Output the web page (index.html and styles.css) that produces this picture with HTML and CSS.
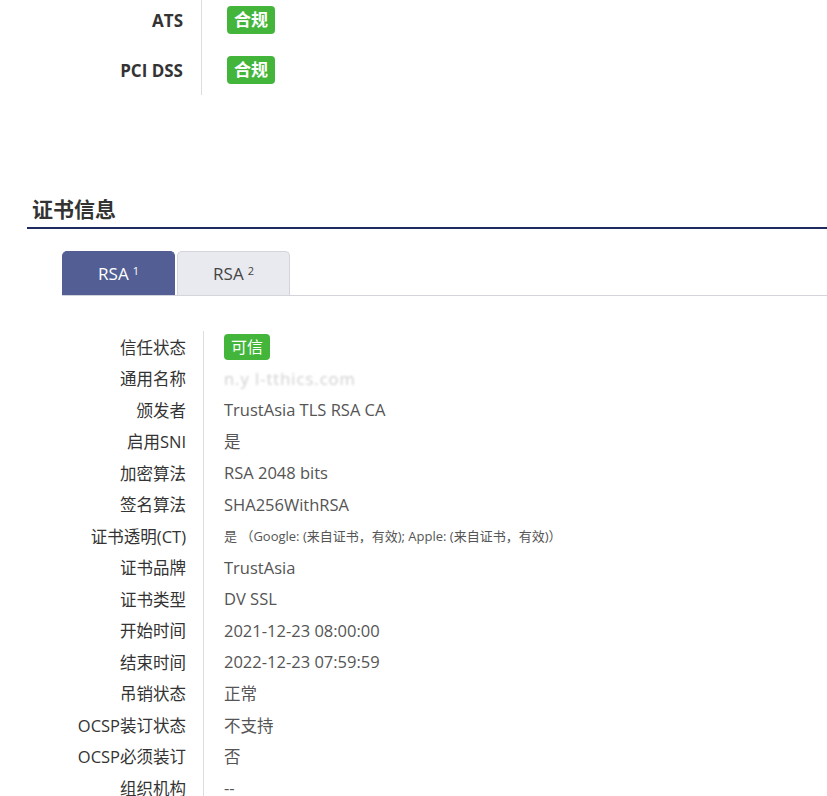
FILE: index.html
```html
<!DOCTYPE html>
<html lang="zh-CN">
<head>
    <meta charset="UTF-8">
    <title>证书信息</title>
    <link rel="stylesheet" href="styles.css">
</head>
<body>
    <div class="compliance">
        <div class="comp-row">
            <div class="comp-label">ATS</div>
            <div class="comp-value"><span class="badge badge-bold">合规</span></div>
        </div>
        <div class="comp-row">
            <div class="comp-label">PCI DSS</div>
            <div class="comp-value"><span class="badge badge-bold">合规</span></div>
        </div>
    </div>

    <h2 class="section-head">证书信息</h2>

    <div class="tabs">
        <div class="tab active">RSA <sup>1</sup></div>
        <div class="tab">RSA <sup>2</sup></div>
    </div>

    <div class="cert-table">
        <div class="cert-label">信任状态</div>
        <div class="cert-value"><span class="badge">可信</span></div>
        <div class="cert-label">通用名称</div>
        <div class="cert-value"><span class="masked">n.y l-tthics.com</span></div>
        <div class="cert-label">颁发者</div>
        <div class="cert-value">TrustAsia TLS RSA CA</div>
        <div class="cert-label">启用SNI</div>
        <div class="cert-value">是</div>
        <div class="cert-label">加密算法</div>
        <div class="cert-value">RSA 2048 bits</div>
        <div class="cert-label">签名算法</div>
        <div class="cert-value">SHA256WithRSA</div>
        <div class="cert-label">证书透明(CT)</div>
        <div class="cert-value small">是 （Google: (来自证书，有效); Apple: (来自证书，有效)）</div>
        <div class="cert-label">证书品牌</div>
        <div class="cert-value">TrustAsia</div>
        <div class="cert-label">证书类型</div>
        <div class="cert-value">DV SSL</div>
        <div class="cert-label">开始时间</div>
        <div class="cert-value">2021-12-23 08:00:00</div>
        <div class="cert-label">结束时间</div>
        <div class="cert-value">2022-12-23 07:59:59</div>
        <div class="cert-label">吊销状态</div>
        <div class="cert-value">正常</div>
        <div class="cert-label">OCSP装订状态</div>
        <div class="cert-value">不支持</div>
        <div class="cert-label">OCSP必须装订</div>
        <div class="cert-value">否</div>
        <div class="cert-label">组织机构</div>
        <div class="cert-value">--</div>
    </div>
</body>
</html>
```

FILE: styles.css
```css
body {
    font-family: "Open Sans", "Noto Sans CJK SC", sans-serif;
    margin: 0;
    background: #fff;
    color: #333;
    overflow: hidden;
}
.compliance {
    margin-top: -5px;
}
.comp-row {
    display: grid;
    grid-template-columns: 202px 1fr;
    height: 50px;
}
.comp-label {
    display: flex;
    align-items: center;
    justify-content: flex-end;
    padding-right: 18px;
    border-right: 1px solid #ddd;
    font-weight: 700;
    font-size: 17px;
    color: #333;
}
.comp-value {
    display: flex;
    align-items: center;
    padding-left: 25px;
}
.badge {
    display: inline-block;
    background: #43b53b;
    color: #fff;
    border-radius: 4px;
    padding: 0 7px;
    font-size: 16px;
    line-height: 26px;
}
.badge-bold {
    font-weight: 700;
    font-size: 17px;
    line-height: 28px;
}
.section-head {
    margin: 100px 0 0 27px;
    padding: 0 0 4px 5px;
    font-size: 21px;
    line-height: 28px;
    font-weight: 700;
    color: #333;
    border-bottom: 2px solid #1f2b5e;
}
.tabs {
    display: flex;
    gap: 2px;
    margin: 22px 0 0 62px;
    border-bottom: 1px solid #d3d4dc;
}
.tab {
    width: 113px;
    height: 44px;
    box-sizing: border-box;
    display: flex;
    align-items: center;
    justify-content: center;
    font-size: 17px;
    color: #444;
    background: #e9eaef;
    border: 1px solid #d3d4dc;
    border-bottom: none;
    border-radius: 5px 5px 0 0;
}
.tab sup {
    font-size: 11px;
    margin-left: 4px;
    position: relative;
    top: -3px;
}
.tab.active {
    background: #525e94;
    border-color: #525e94;
    color: #fff;
}
.cert-table {
    display: grid;
    grid-template-columns: 204px 1fr;
    grid-auto-rows: 31.5px;
    margin-top: 35px;
    font-size: 16.5px;
}
.cert-label {
    display: flex;
    align-items: center;
    justify-content: flex-end;
    padding-right: 17px;
    border-right: 1px solid #ddd;
    color: #333;
}
.cert-value {
    display: flex;
    align-items: center;
    padding-left: 20px;
    color: #555;
}
.cert-value.small {
    font-size: 13px;
}
.masked {
    color: #d0d0d0;
    filter: blur(1px);
    letter-spacing: 1px;
}
```
